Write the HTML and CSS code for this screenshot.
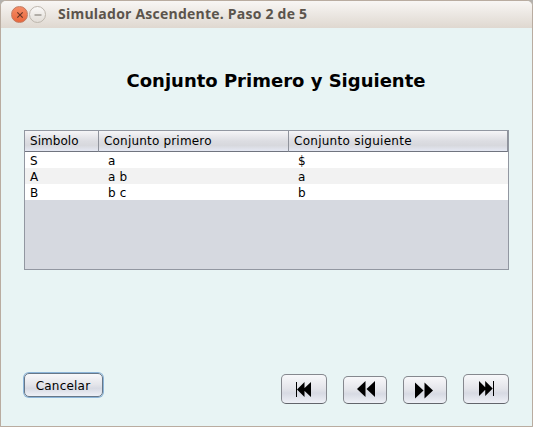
FILE: index.html
```html
<!DOCTYPE html>
<html lang="es">
<head>
<meta charset="utf-8">
<title>Simulador Ascendente</title>
<link rel="stylesheet" href="styles.css">
</head>
<body>
<div class="window">
  <header class="titlebar">
    <span class="control close"><svg width="16" height="16" viewBox="0 0 16 16"><path d="M5.3 5.3l5.4 5.4M10.700 5.300l-5.400 5.400" stroke="#693626" stroke-width="1.200"/></svg></span>
    <span class="control minimize"><svg width="16" height="16" viewBox="0 0 16 16"><path d="M4.500 8h7" stroke="#77736b" stroke-width="1.200"/></svg></span>
    <span class="caption">Simulador Ascendente. Paso 2 de 5</span>
  </header>
  <main class="content">
    <h1>Conjunto Primero y Siguiente</h1>
    <div class="table-pane">
      <table>
        <colgroup><col class="c1"><col class="c2"><col class="c3"></colgroup>
        <thead><tr><th>Simbolo</th><th>Conjunto primero</th><th>Conjunto siguiente</th></tr></thead>
        <tbody>
          <tr><td>S</td><td>a</td><td>$</td></tr>
          <tr><td>A</td><td>a b</td><td>a</td></tr>
          <tr><td>B</td><td>b c</td><td>b</td></tr>
        </tbody>
      </table>
    </div>
    <footer class="actions">
      <button class="btn cancel">Cancelar</button>
      <nav class="steps">
        <button class="btn large" aria-label="Primero"><svg width="46" height="30" viewBox="0 0 46 30"><path d="M15 8h1v15h-1zM16 15.500L23.500 8v15zM22 15.500L30 8v15z"/></svg></button>
        <button class="btn small" aria-label="Anterior"><svg width="44" height="28" viewBox="0 0 44 28"><path d="M14 13L22.500 5v16zM23.500 13L32 5v16z"/></svg></button>
        <button class="btn small" aria-label="Siguiente"><svg width="44" height="28" viewBox="0 0 44 28"><path d="M12 6.500v16L20.500 14.500zM21.500 6.500v16L30 14.500z"/></svg></button>
        <button class="btn large" aria-label="Último"><svg width="46" height="30" viewBox="0 0 46 30"><path d="M16 7v15L23.500 14.500zM22.200 7v15L29.700 14.500zM30 7h1v15h-1z"/></svg></button>
      </nav>
    </footer>
  </main>
</div>
</body>
</html>
```
FILE: styles.css
```css
* { box-sizing: border-box; }
body { margin: 0; background: #b4b1ad; font: 12px "DejaVu Sans", sans-serif; color: #000; }
.window {
  width: 533px; height: 427px;
  display: flex; flex-direction: column;
  border: 1px solid #b9aca0;
  border-radius: 6px 6px 0 0;
  background: #e8f4f4;
  overflow: hidden;
}
.titlebar {
  height: 27px; flex: none;
  display: flex; align-items: center;
  padding-left: 10px;
  background: linear-gradient(#f8f6f4, #dfd8d0);
}
.control {
  width: 17px; height: 17px; margin-right: 1px;
  display: flex; align-items: center; justify-content: center;
  border-radius: 50%;
  border: 1px solid #bdb6ad;
}
.control svg { flex: none; }
.close { background: linear-gradient(#f58c66, #e9673c); border-color: #c17a60; }
.minimize { background: linear-gradient(#faf9f8, #e2ddd7); }
.caption {
  margin-left: 11px; padding-bottom: 2px;
  font: bold 14px/25px "Open Sans", sans-serif;
  letter-spacing: 0.23px;
  color: #5b544c;
  white-space: nowrap;
}
.content { flex: 1; padding: 0 23px; display: flex; flex-direction: column; }
h1 { margin: 42px 0 0; padding-left: 19px; height: 60px; font-size: 18px; line-height: 22px; text-align: center; white-space: nowrap; }
.table-pane { height: 140px; border: 1px solid #9297a1; background: #d6d9e0; }
table { width: 483px; border-collapse: separate; border-spacing: 0; table-layout: fixed; }
.c1 { width: 74px; }
.c2 { width: 190px; }
th {
  height: 21px; padding: 0 5px; line-height: 20px;
  font-weight: normal; text-align: left; white-space: nowrap;
  letter-spacing: 0.19px;
  border-right: 1px solid #8f939c; border-bottom: 1px solid #70747f;
  background: linear-gradient(#f5f5f7, #dcdde2 50%, #d7d8dd 72%, #e5e8f3);
}
th:first-child { letter-spacing: 0.05px; }
th:last-child { letter-spacing: 0.27px; }
td { height: 16px; padding: 2px 9px 0; line-height: 14px; letter-spacing: 0.2px; background: #fff; }
td:first-child { padding-left: 5px; }
tr:nth-child(even) td { background: #f2f2f2; }
.actions { margin-top: 103px; display: flex; justify-content: space-between; align-items: flex-start; }
.btn {
  padding: 0; font: 12px "DejaVu Sans", sans-serif; color: #000;
  border: 1px solid #85888e; border-bottom-color: #62656b; border-radius: 5px;
  background: linear-gradient(#f8f8fa, #e4e5ea 48%, #d7dae3 65%, #eef0f6);
  display: flex; align-items: center; justify-content: center;
}
.btn svg { flex: none; }
.cancel { width: 79px; height: 24px; padding: 2px 1px 0 0; letter-spacing: 0.22px; border-color: #667788; box-shadow: 0 0 0 1px #8db5d9; }
.steps { display: flex; align-items: flex-end; gap: 16px; margin-top: 1px; }
.large { width: 46px; height: 30px; }
.small { width: 44px; height: 28px; }
```
